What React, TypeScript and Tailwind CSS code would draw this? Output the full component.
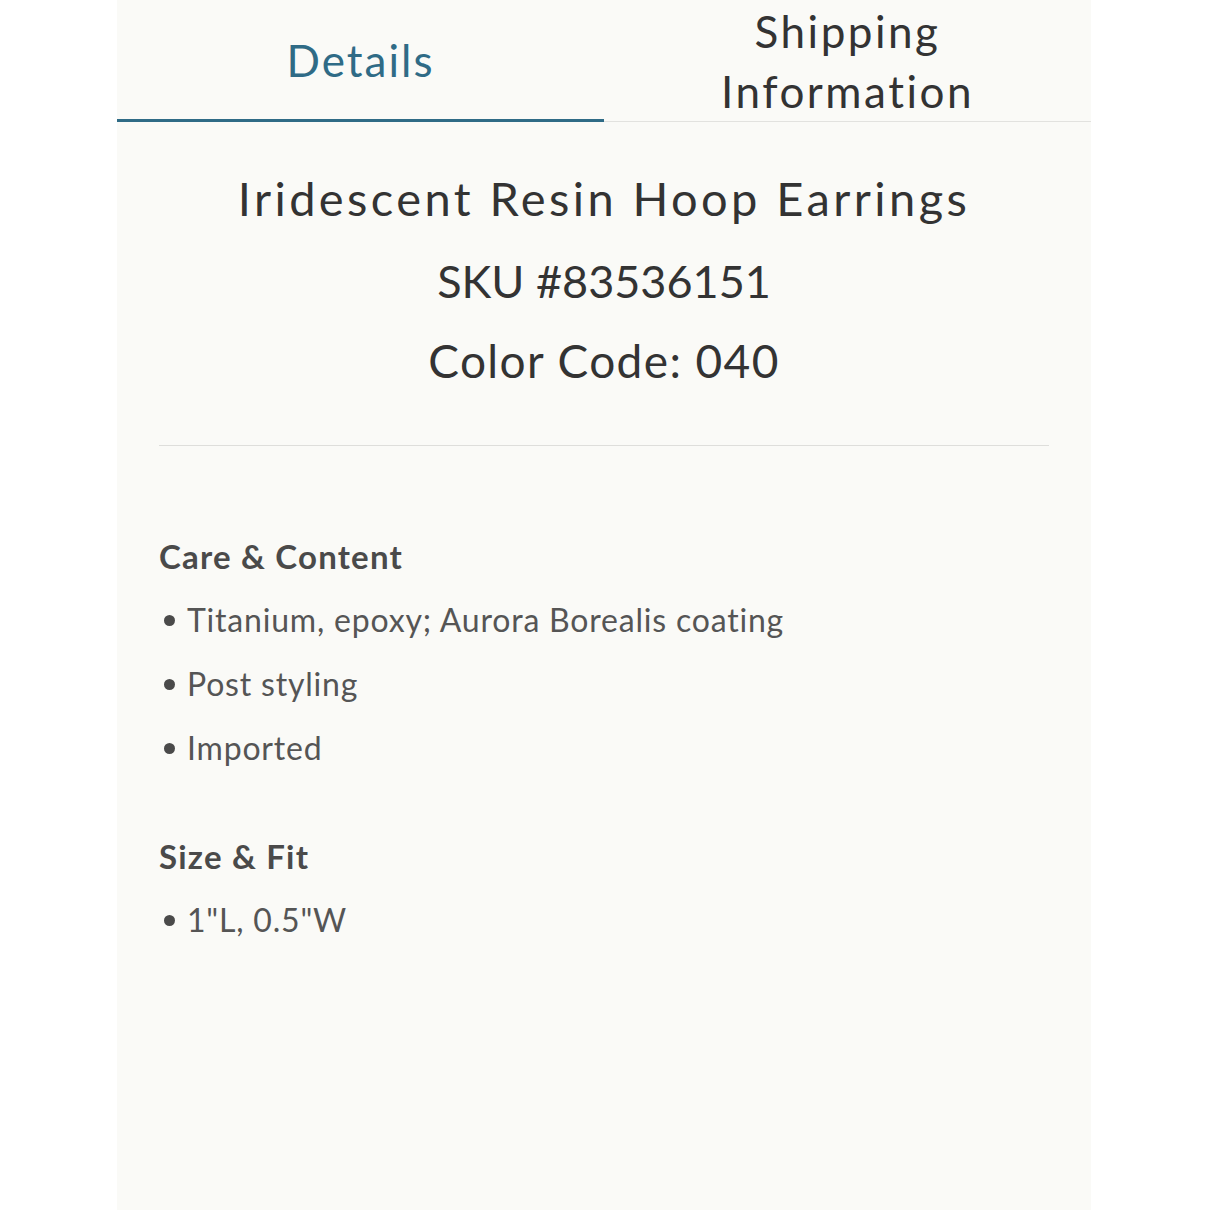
const careItems = ["Titanium, epoxy; Aurora Borealis coating", "Post styling", "Imported"];
const fitItems = ['1"L, 0.5"W'];

function Bullet({ text }: { text: string }) {
  return (
    <li className="flex items-center h-[64px] text-[32px] text-[#555] tracking-[0.8px]">
      <span className="w-[11px] h-[11px] rounded-full bg-[#4a4a4a] ml-[5px] mr-[12px]" />
      {text}
    </li>
  );
}

export default function App() {
  return (
    <div className="bg-white min-h-[1210px] font-['Lato','Noto_Sans',sans-serif]">
      <div className="ml-[117px] w-[974px] min-h-[1210px] bg-[#fafaf7]">
        {/* tabs */}
        <div className="grid grid-cols-2">
          <button className="h-[122px] flex items-center justify-center border-b-[3px] border-[#2f6b86] text-[44px] text-[#2f6b86] tracking-[2px]">
            Details
          </button>
          <button className="h-[122px] flex items-center justify-center border-b border-[#e2e2df] text-[44px] leading-[60px] text-[#333] tracking-[2.5px] text-center">
            Shipping
            <br />
            Information
          </button>
        </div>

        <div className="px-[42px] pt-[36px]">
          <div className="text-center text-[#333]">
            <h1 className="text-[47px] leading-[80px] tracking-[3.4px]">Iridescent Resin Hoop Earrings</h1>
            <p className="mt-[3px] text-[45px] leading-[80px] tracking-[0px]">SKU #83536151</p>
            <p className="text-[46px] leading-[80px] tracking-[1.4px]">Color Code: 040</p>
          </div>

          <div className="mt-[44px] h-px bg-[#dededb]" />

          <h2 className="mt-[86px] text-[33px] leading-[48px] font-bold text-[#4a4a4a] tracking-[1.2px]">Care &amp; Content</h2>
          <ul className="mt-[8px]">
            {careItems.map((t) => (
              <Bullet key={t} text={t} />
            ))}
          </ul>

          <h2 className="mt-[52px] text-[33px] leading-[48px] font-bold text-[#4a4a4a] tracking-[1.2px]">Size &amp; Fit</h2>
          <ul className="mt-[8px]">
            {fitItems.map((t) => (
              <Bullet key={t} text={t} />
            ))}
          </ul>
        </div>
      </div>
    </div>
  );
}
